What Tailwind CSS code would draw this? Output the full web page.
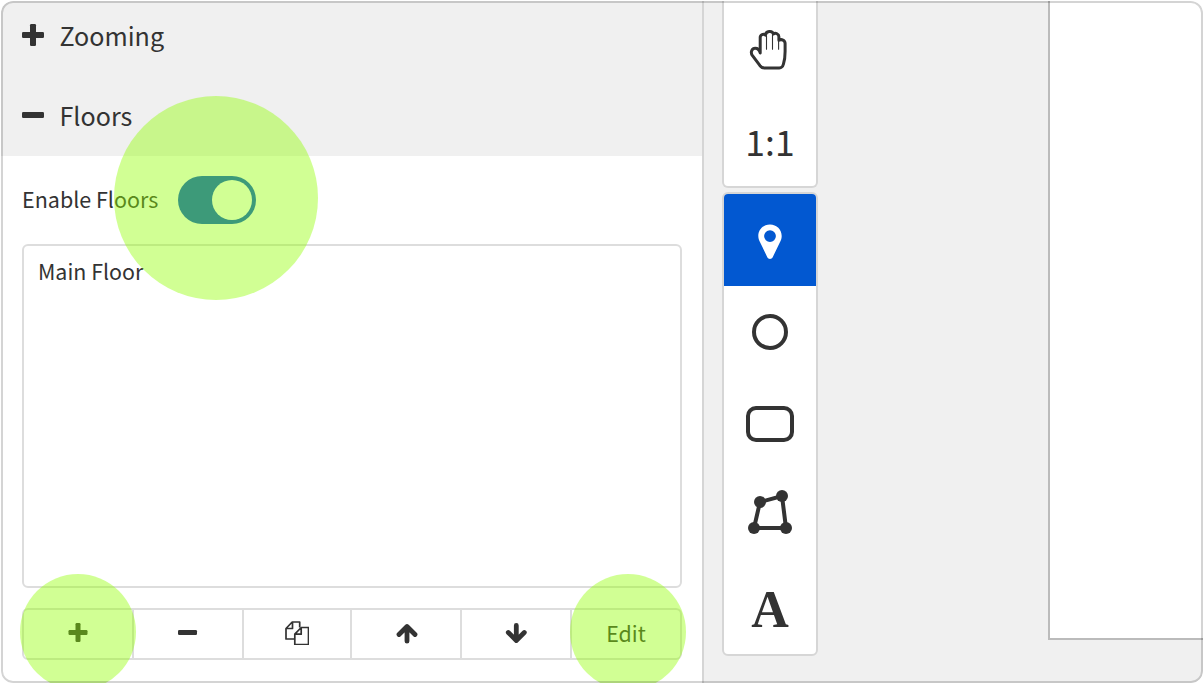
<!DOCTYPE html>
<html lang="en">
<head>
<meta charset="utf-8">
<title>Floors</title>
<script src="https://cdn.jsdelivr.net/npm/@tailwindcss/browser@4"></script>
</head>
<body class="h-[684px] w-[1204px] overflow-hidden bg-white p-px font-['Noto_Sans_CJK_SC','Source_Sans_Pro',sans-serif] text-[#333]">
<main class="relative flex h-[682px] w-[1202px] overflow-hidden rounded-xl bg-[#f0f0f0]">
  <aside class="flex h-full w-[703px] shrink-0 flex-col border-r-2 border-[#d5d5d5] bg-white">
    <div class="flex h-[75px] shrink-0 items-start bg-[#f0f0f0] pt-[12px] pl-[21px]">
      <svg class="mt-[11px] h-[22px] w-[22px]" viewBox="0 0 22 22" fill="#333"><rect x="8" width="6" height="22" rx="1.3"/><rect y="8" width="22" height="6" rx="1.3"/></svg>
      <h2 class="pl-[15.5px] text-[25.1px] leading-[44px]">Zooming</h2>
    </div>
    <div class="flex h-20 shrink-0 items-start bg-[#f0f0f0] pt-[17px] pl-[21px]">
      <svg class="mt-[11px] h-[22px] w-[22px]" viewBox="0 0 22 22" fill="#333"><rect y="8" width="22" height="6" rx="1.3"/></svg>
      <h2 class="pl-[15.5px] text-[25.1px] leading-[44px]">Floors</h2>
    </div>
    <div class="flex h-[88px] shrink-0 items-center pl-[21px]">
      <span class="w-[156px] pb-[2px] text-[21.5px] leading-8 whitespace-nowrap">Enable Floors</span>
      <span class="flex h-12 w-[78px] items-center justify-end rounded-full bg-[#0052d1] pr-1"><span class="h-10 w-10 rounded-full bg-white"></span></span>
    </div>
    <div class="ml-[21px] h-[344px] w-[660px] shrink-0 rounded-md border-2 border-[#ddd] pt-[9px] pl-[14px] text-[21.4px] leading-8">Main Floor</div>
    <div class="mt-5 ml-[21px] flex h-[52px] w-[660px] shrink-0 rounded-md border-2 border-[#ddd]">
      <div class="flex w-[110px] items-start justify-center border-r-2 border-[#ddd] pt-[13px]"><svg class="h-5 w-5" viewBox="0 0 20 20" fill="#333"><rect x="7.5" y="0" width="5" height="19" rx="1.2"/><rect x=".5" y="7" width="19" height="5" rx="1.2"/></svg></div>
      <div class="flex w-[110px] items-start justify-center border-r-2 border-[#ddd] pt-[13px]"><svg class="h-5 w-5" viewBox="0 0 20 20" fill="#333"><rect x="0" y="7" width="19" height="5" rx="1.2"/></svg></div>
      <div class="flex w-[108px] items-start justify-center border-r-2 border-[#ddd] pt-[11px]"><svg class="h-6 w-6" viewBox="0 0 24 24" fill="none" stroke="#333" stroke-width="1.7" stroke-linejoin="round"><path d="M9.8 18H1V7.5L7.2 1h7.5v5.5M7.5 1v6.5H1"/><path d="M16.2 6.5h7.3v17H9.8V13.2zM16.2 6.5v6.7H9.8"/></svg></div>
      <div class="flex w-[110px] items-start justify-center border-r-2 border-[#ddd] pt-[13px]"><svg class="ml-[2px] h-[22px] w-[22px]" viewBox="0 0 22 22" fill="none" stroke="#333" stroke-width="4.8" stroke-linecap="round" stroke-linejoin="round"><path d="M11 18.2V3.8M3 11.5L11 3.5l8 8"/></svg></div>
      <div class="flex w-[110px] items-start justify-center border-r-2 border-[#ddd] pt-[12px]"><svg class="h-[22px] w-[22px]" viewBox="0 0 22 22" fill="none" stroke="#333" stroke-width="4.8" stroke-linecap="round" stroke-linejoin="round"><path d="M11.3 3.4v14.8M3.3 10.5l8 8 8-8"/></svg></div>
      <div class="flex flex-1 items-center justify-center pb-[2px] text-[21.4px]">Edit</div>
    </div>
  </aside>
  <nav class="ml-[18px] flex w-24 shrink-0 flex-col gap-1">
    <div class="h-[187px] rounded-b-md border-2 border-t-0 border-[#d6d6d6] bg-white pt-px">
      <div class="flex h-[92px] items-center justify-center"><svg class="mt-[2px] mr-[2px] h-11 w-11" viewBox="0 0 44 44" fill="none" stroke="#333" stroke-linejoin="round" stroke-linecap="round"><path stroke-width="3" d="M13.2 26V10.5C13.2 7.6 16.5 6.4 18.5 8.2 18.7 3.6 25.5 3.6 26.3 7 28.7 5.3 31.9 7 31.9 9.8V13.3C34.5 11.7 38.1 13.2 38.1 16.4V24.5C38.1 30.5 37.5 34 36.4 37.2 35.6 40.2 34.8 40.9 32.3 40.9H17.1C15.3 40.9 14.2 40.2 13 38.7L5.5 28.7C2.9 25 5.2 21.2 8.2 21.2 10.7 21.2 12.4 22.8 13.2 26Z"/><path stroke-width="1.1" d="M19.5 9v13.3M25.5 8v14.3M31.6 12v10.3"/></svg></div>
      <div class="flex h-[92px] items-center justify-center pt-[2px] text-[35.5px]">1:1</div>
    </div>
    <div class="h-[464px] overflow-hidden rounded-md border-2 border-[#d6d6d6] bg-white">
      <div class="flex h-[92px] items-center justify-center bg-[#0258d1]"><svg class="mt-[4px] h-9 w-6" viewBox="0 0 24 36"><path fill="#fff" fill-rule="evenodd" d="M12 .5C5.3.5.3 5.6.3 12c0 2.8 1 4.7 2 6.7L9.3 33.2c1.1 2.3 4.3 2.3 5.4 0l7-14.5c1-2 2-3.9 2-6.7C23.7 5.6 18.7.5 12 .5ZM12 6.2a5.9 5.9 0 1 0 0 11.8 5.9 5.9 0 0 0 0-11.8Z"/></svg></div>
      <div class="flex h-[92px] items-center justify-center"><span class="h-9 w-9 rounded-full border-4 border-[#333]"></span></div>
      <div class="flex h-[92px] items-center justify-center"><span class="h-9 w-12 rounded-[10px] border-4 border-[#333]"></span></div>
      <div class="flex h-[92px] items-center justify-center"><svg class="mb-[8px] h-11 w-11" viewBox="0 0 44 44" fill="#333"><path fill="none" stroke="#333" stroke-width="4" d="M6 38 12 12 34 6 38 38Z"/><circle cx="6" cy="38" r="6"/><circle cx="12" cy="12" r="6"/><circle cx="34" cy="6" r="6"/><circle cx="38" cy="38" r="6"/></svg></div>
      <div class="flex h-[92px] items-center justify-center pt-[4px] font-['Liberation_Serif',serif] text-[52px] leading-none font-bold">A</div>
    </div>
  </nav>
  <section class="ml-[230px] h-[639px] flex-1 border-b-2 border-l-2 border-[#bbb] bg-white"></section>

  <div class="absolute top-[95px] left-[113px] h-[204px] w-[204px] rounded-full bg-[#92ff00]/42"></div>
  <div class="absolute top-[573px] left-[19px] h-[116px] w-[116px] rounded-full bg-[#92ff00]/42"></div>
  <div class="absolute top-[573px] left-[569px] h-[116px] w-[116px] rounded-full bg-[#92ff00]/42"></div>
  <div class="pointer-events-none absolute inset-0 rounded-xl border-2 border-black/17"></div>
</main>
</body>
</html>
